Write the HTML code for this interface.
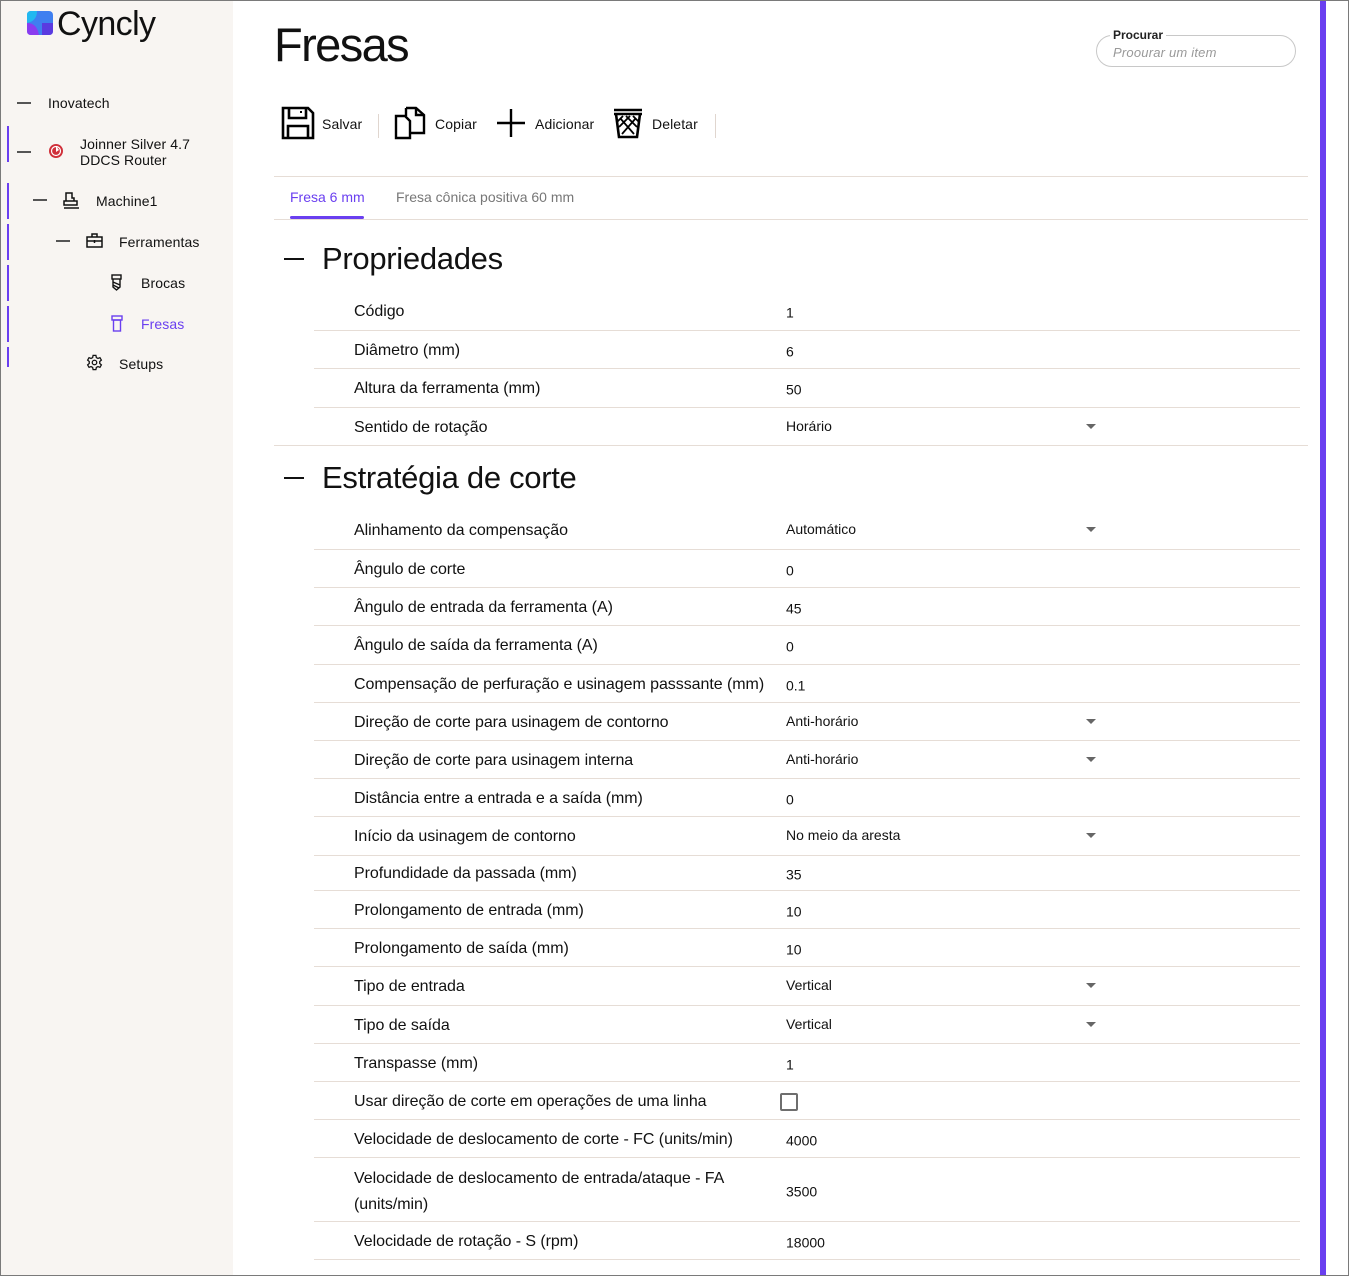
<!DOCTYPE html>
<html><head><meta charset="utf-8"><style>
*{box-sizing:border-box;margin:0;padding:0}
body{width:1349px;height:1276px;overflow:hidden;background:#fff;font-family:"Liberation Sans",sans-serif;color:#111;position:relative}
.frame{position:absolute;inset:0;border:1px solid #7a7a7a;pointer-events:none;z-index:10}
.side{position:absolute;left:1px;top:1px;width:232px;height:1274px;background:#f8f5f2}
.a{position:absolute;white-space:nowrap}
.dash{position:absolute;height:2px;width:14px;background:#555}
.vbar{position:absolute;left:7px;width:2px;background:#6a3ff0}
.nav{font-size:14px;letter-spacing:0.1px}
.row{position:absolute;left:314px;width:986px;border-bottom:1px solid #e6ddd6;display:flex;align-items:center}
.row .l{position:absolute;left:40px;top:50%;transform:translateY(-46%);font-size:16px;letter-spacing:-0.05px;line-height:26px}
.row .v{position:absolute;left:472px;font-size:14px;top:50%;transform:translateY(-40%)}
.row .v.d{transform:translateY(-55%)}
.row .ar{position:absolute;left:772px;top:50%;margin-top:-3px;width:0;height:0;border-left:5px solid transparent;border-right:5px solid transparent;border-top:5px solid #666}
.tb{font-size:14px;letter-spacing:0.1px}
</style></head><body>
<div class="side"></div>
<svg class="a" style="left:27px;top:11px" width="26" height="24" viewBox="0 0 26 24">
<rect x="0" y="0" width="26" height="24" rx="4" fill="#3f7ff0"/>
<path d="M0 4 Q0 0 4 0 H10 Q10 10 0 12Z" fill="#22b8f0"/>
<path d="M0 12 Q10 12 12 24 H4 Q0 24 0 20Z" fill="#8a3cf0"/>
<path d="M15 12 H26 V20 Q26 24 22 24 H15Z" fill="#5a3ae0"/>
</svg>
<div class="a" style="left:57px;top:5px;font-size:34px;letter-spacing:-0.6px">Cyncly</div>
<div class="dash" style="left:17px;top:102px"></div>
<div class="a nav" style="left:48px;top:95px">Inovatech</div>
<div class="vbar" style="top:126px;height:36px"></div>
<div class="dash" style="left:17px;top:151px"></div>
<svg class="a" style="left:48px;top:143px" width="16" height="16" viewBox="0 0 16 16"><circle cx="8" cy="8" r="7" fill="#d0303a"/><circle cx="8" cy="8" r="4.5" fill="none" stroke="#fff" stroke-width="1.2"/><path d="M8 3 L11 7 L8 9 Z" fill="#fff"/></svg>
<div class="a nav" style="left:80px;top:136px;line-height:16px">Joinner Silver 4.7<br>DDCS Router</div>
<div class="vbar" style="top:183px;height:36px"></div>
<div class="dash" style="left:33px;top:199px"></div>
<svg class="a" style="left:63px;top:192px" width="17" height="17" viewBox="0 0 17 17" fill="none" stroke="#111" stroke-width="1.5"><path d="M3 1 H9 V6 H11 V9 H14 V13 H1 V9 H3 Z M3 9 H11"/><path d="M1 16 H16"/></svg>
<div class="a nav" style="left:96px;top:193px">Machine1</div>
<div class="vbar" style="top:224px;height:36px"></div>
<div class="dash" style="left:56px;top:240px"></div>
<svg class="a" style="left:86px;top:233px" width="17" height="15" viewBox="0 0 17 15" fill="none" stroke="#111" stroke-width="1.5"><rect x="1" y="4" width="15" height="10"/><path d="M6 4 V1 H11 V4 M1 8 H16 M8.5 7 V10"/></svg>
<div class="a nav" style="left:119px;top:234px">Ferramentas</div>
<div class="vbar" style="top:265px;height:36px"></div>
<svg class="a" style="left:111px;top:274px" width="11" height="17" viewBox="0 0 11 17" fill="none" stroke="#111" stroke-width="1.4"><rect x="1" y="1" width="9" height="4"/><path d="M2 5 V13 L5.5 16 L9 13 V5 M2 8 L9 11 M2 11 L8 14"/></svg>
<div class="a nav" style="left:141px;top:275px">Brocas</div>
<div class="vbar" style="top:306px;height:36px"></div>
<svg class="a" style="left:111px;top:315px" width="12" height="17" viewBox="0 0 12 17" fill="none" stroke="#6a3ff0" stroke-width="1.4"><rect x="1" y="1" width="10" height="4"/><rect x="2.5" y="5" width="7" height="11"/></svg>
<div class="a nav" style="left:141px;top:316px;color:#6a3ff0">Fresas</div>
<div class="vbar" style="top:347px;height:20px"></div>
<svg class="a" style="left:86px;top:354px" width="17" height="17" viewBox="0 0 24 24" fill="none" stroke="#111" stroke-width="1.8"><circle cx="12" cy="12" r="3.2"/><path d="M10 2h4l.6 3 2.3 1.3 2.8-1.1 2 3.4-2.3 2 v2.8l2.3 2-2 3.4-2.8-1.1-2.3 1.3-.6 3h-4l-.6-3-2.3-1.3-2.8 1.1-2-3.4 2.3-2v-2.8l-2.3-2 2-3.4 2.8 1.1L9.4 5z"/></svg>
<div class="a nav" style="left:119px;top:356px">Setups</div>

<div class="a" style="left:274px;top:17px;font-size:47px;letter-spacing:-1.6px">Fresas</div>
<div class="a" style="left:1096px;top:35px;width:200px;height:32px;border:1px solid #c8c8c8;border-radius:16px"></div>
<div class="a" style="left:1110px;top:28px;background:#fff;padding:0 3px;font-size:12px;font-weight:bold;color:#222">Procurar</div>
<div class="a" style="left:1113px;top:45px;font-size:13px;font-style:italic;color:#999;letter-spacing:0.2px">Proourar um item</div>
<div class="a" style="left:1320px;top:1px;width:6px;height:1274px;background:#6a3ff0"></div>

<svg class="a" style="left:281px;top:106px" width="34" height="34" viewBox="0 0 34 34" fill="none" stroke="#000" stroke-width="2.6"><path d="M2 2 H27 L32 7 V32 H2 Z"/><path d="M8 2 V12 H25 V2"/><path d="M7 32 V20 H27 V32"/><rect x="19" y="5" width="2" height="2" fill="#000" stroke="none"/></svg>
<div class="a tb" style="left:322px;top:116px">Salvar</div>
<div class="a" style="left:378px;top:114px;width:1px;height:24px;background:#e0d6cf"></div>
<svg class="a" style="left:394px;top:106px" width="34" height="34" viewBox="0 0 34 34" fill="none" stroke="#000" stroke-width="2.4"><path d="M2 10 H11 L16 15 V32 H2 Z"/><path d="M12 2 H22 L30 9 V27 H16"/><path d="M12 2 V10 M22 2 V9 H30"/></svg>
<div class="a tb" style="left:435px;top:116px">Copiar</div>
<svg class="a" style="left:497px;top:109px" width="28" height="28" viewBox="0 0 28 28" stroke="#000" stroke-width="2.4"><path d="M14 0 V28 M0 14 H28"/></svg>
<div class="a tb" style="left:535px;top:116px">Adicionar</div>
<svg class="a" style="left:612px;top:107px" width="32" height="32" viewBox="0 0 32 32" fill="none" stroke="#000" stroke-width="2.6"><path d="M2 3 H30 M2 7 H30 M4 7 L7 30 H25 L28 7"/><path d="M8 11 L22 27 M24 11 L10 27 M14 9 L25 20 M18 9 L7 20 M11 9 L5 15 M21 9 L27 15" stroke-width="1.8"/></svg>
<div class="a tb" style="left:652px;top:116px">Deletar</div>
<div class="a" style="left:715px;top:114px;width:1px;height:24px;background:#e0d6cf"></div>

<div class="a" style="left:274px;top:176px;width:1034px;height:1px;background:#e6ddd6"></div>
<div class="a" style="left:290px;top:189px;font-size:14px;color:#6a3ff0">Fresa 6 mm</div>
<div class="a" style="left:396px;top:189px;font-size:14px;color:#777">Fresa cônica positiva 60 mm</div>
<div class="a" style="left:274px;top:219px;width:1034px;height:1px;background:#e6ddd6"></div>
<div class="a" style="left:290px;top:216px;width:74px;height:3px;background:#6a3ff0;border-radius:2px"></div>

<div class="a" style="left:284px;top:258px;width:20px;height:2px;background:#111"></div>
<div class="a" style="left:322px;top:241px;font-size:31px;letter-spacing:-0.3px">Propriedades</div>
<div class="row" style="top:292px;height:39px"><span class="l">Código</span><span class="v">1</span></div>
<div class="row" style="top:331px;height:38px"><span class="l">Diâmetro (mm)</span><span class="v">6</span></div>
<div class="row" style="top:369px;height:39px"><span class="l">Altura da ferramenta (mm)</span><span class="v">50</span></div>
<div class="row" style="top:408px;height:38px;border:none"><span class="l">Sentido de rotação</span><span class="v d">Horário</span><span class="ar"></span></div>
<div class="a" style="left:274px;top:445px;width:1034px;height:1px;background:#e6ddd6"></div>

<div class="a" style="left:284px;top:477px;width:20px;height:2px;background:#111"></div>
<div class="a" style="left:322px;top:460px;font-size:31px;letter-spacing:-0.3px">Estratégia de corte</div>
<div class="row" style="top:511px;height:39px"><span class="l">Alinhamento da compensação</span><span class="v d">Automático</span><span class="ar"></span></div>
<div class="row" style="top:550px;height:38px"><span class="l">Ângulo de corte</span><span class="v">0</span></div>
<div class="row" style="top:588px;height:38px"><span class="l">Ângulo de entrada da ferramenta (A)</span><span class="v">45</span></div>
<div class="row" style="top:626px;height:39px"><span class="l">Ângulo de saída da ferramenta (A)</span><span class="v">0</span></div>
<div class="row" style="top:665px;height:38px"><span class="l">Compensação de perfuração e usinagem passsante (mm)</span><span class="v">0.1</span></div>
<div class="row" style="top:703px;height:38px"><span class="l">Direção de corte para usinagem de contorno</span><span class="v d">Anti-horário</span><span class="ar"></span></div>
<div class="row" style="top:741px;height:38px"><span class="l">Direção de corte para usinagem interna</span><span class="v d">Anti-horário</span><span class="ar"></span></div>
<div class="row" style="top:779px;height:38px"><span class="l">Distância entre a entrada e a saída (mm)</span><span class="v">0</span></div>
<div class="row" style="top:817px;height:39px"><span class="l">Início da usinagem de contorno</span><span class="v d">No meio da aresta</span><span class="ar"></span></div>
<div class="row" style="top:856px;height:35px"><span class="l">Profundidade da passada (mm)</span><span class="v">35</span></div>
<div class="row" style="top:891px;height:38px"><span class="l">Prolongamento de entrada (mm)</span><span class="v">10</span></div>
<div class="row" style="top:929px;height:38px"><span class="l">Prolongamento de saída (mm)</span><span class="v">10</span></div>
<div class="row" style="top:967px;height:39px"><span class="l">Tipo de entrada</span><span class="v d">Vertical</span><span class="ar"></span></div>
<div class="row" style="top:1006px;height:38px"><span class="l">Tipo de saída</span><span class="v d">Vertical</span><span class="ar"></span></div>
<div class="row" style="top:1044px;height:38px"><span class="l">Transpasse (mm)</span><span class="v">1</span></div>
<div class="row" style="top:1082px;height:38px"><span class="l">Usar direção de corte em operações de uma linha</span><span style="position:absolute;left:466px;top:11px;width:18px;height:18px;border:2px solid #6e6e6e;border-radius:2px"></span></div>
<div class="row" style="top:1120px;height:38px"><span class="l">Velocidade de deslocamento de corte - FC (units/min)</span><span class="v">4000</span></div>
<div class="row" style="top:1158px;height:64px"><span class="l">Velocidade de deslocamento de entrada/ataque - FA<br>(units/min)</span><span class="v">3500</span></div>
<div class="row" style="top:1222px;height:38px"><span class="l">Velocidade de rotação - S (rpm)</span><span class="v">18000</span></div>
<div class="frame"></div>
</body></html>
